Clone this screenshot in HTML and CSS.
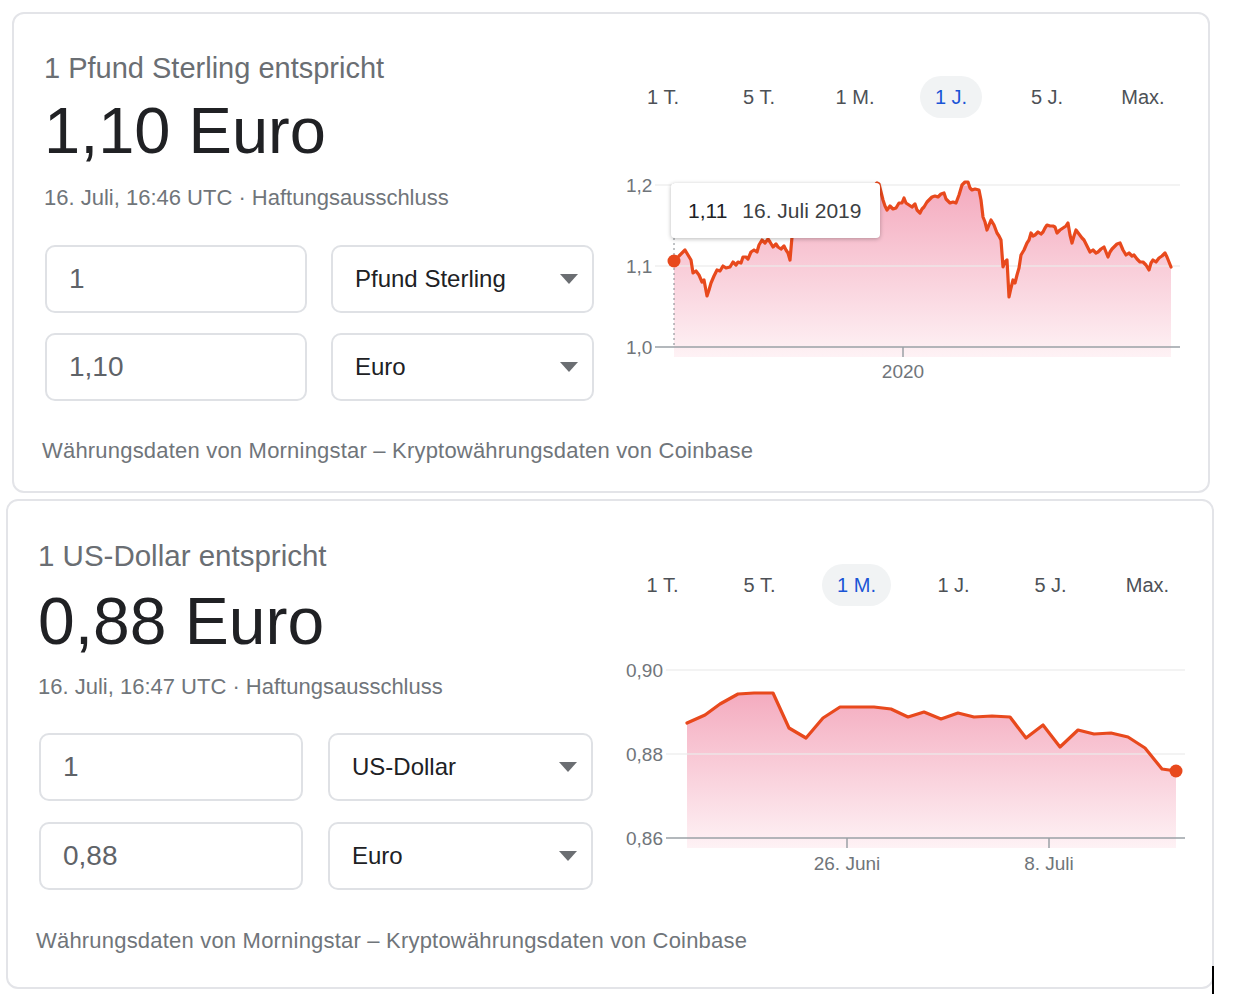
FILE: index.html
```html
<!DOCTYPE html>
<html lang="de">
<head>
<meta charset="utf-8">
<title>Währungsrechner</title>
<link rel="stylesheet" href="styles.css">
</head>
<body>
<section class="card card--gbp">
  <div class="card__row">
    <div class="converter">
      <div class="converter__title">1 Pfund Sterling entspricht</div>
      <div class="converter__amount">1,10 Euro</div>
      <div class="converter__meta">16. Juli, 16:46 UTC · Haftungsausschluss</div>
      <div class="converter__fields">
        <input class="field field--amount" type="text" value="1" readonly>
        <div class="field field--select"><span>Pfund Sterling</span><svg class="caret" width="18" height="10" viewBox="0 0 18 10"><polygon points="0,0 18,0 9,10"/></svg></div>
        <input class="field field--amount" type="text" value="1,10" readonly>
        <div class="field field--select"><span>Euro</span><svg class="caret" width="18" height="10" viewBox="0 0 18 10"><polygon points="0,0 18,0 9,10"/></svg></div>
      </div>
    </div>
    <div class="chart">
      <div class="chart__tabs">
        <div class="tab"><span>1 T.</span></div>
        <div class="tab"><span>5 T.</span></div>
        <div class="tab"><span>1 M.</span></div>
        <div class="tab tab--active"><span>1 J.</span></div>
        <div class="tab"><span>5 J.</span></div>
        <div class="tab"><span>Max.</span></div>
      </div>
      <div class="chart__plot">
        <svg class="chart__svg" width="580" height="272" viewBox="0 0 580 272">
          <defs>
            <linearGradient id="fillGbp" x1="0" y1="183" x2="0" y2="357" gradientUnits="userSpaceOnUse">
              <stop offset="0" stop-color="#f4aabe"/>
              <stop offset="1" stop-color="#fef2f5"/>
            </linearGradient>
          </defs>
          <g transform="translate(-615 -118)">
            <path fill="url(#fillGbp)" d="M674,262 679,256 685,250 688,255 691,260 693,273 696,271 699,275 702,282 704,280 707,296 709,290 711,283 714,276 717,270 720,271 723,266 726,268 730,267 733,262 736,265 738,262 741,263 743,257 746,257 748,259 751,252 754,250 757,252 759,245 762,240 765,243 768,239 770,242 773,247 776,244 778,247 781,249 784,246 786,250 788,253 790,260 792,237 800,228 810,222 820,216 830,212 840,205 850,200 860,195 870,190 877,183 879,184 881,192 883,200 885,206 887,210 890,206 893,209 896,208 899,203 902,203 904,198 906,203 909,205 912,207 915,204 917,210 920,213 922,209 924,207 927,202 930,199 932,197 935,196 938,197 941,194 944,193 946,199 948,201 950,203 953,202 956,203 959,195 962,185 965,182 968,182 970,188 972,190 975,189 979,190 981,200 983,217 985,222 987,230 989,225 991,220 994,225 997,233 999,236 1001,240 1003,267 1005,262 1007,260 1009,297 1011,288 1013,280 1015,283 1017,275 1019,268 1021,255 1024,250 1027,243 1029,240 1031,233 1033,236 1035,235 1038,232 1041,234 1043,232 1045,228 1047,225 1050,226 1053,226 1055,227 1057,233 1060,230 1063,228 1066,226 1068,223 1070,235 1072,243 1074,236 1076,230 1079,234 1082,238 1084,240 1087,246 1090,252 1093,250 1096,253 1098,252 1101,249 1104,247 1106,252 1108,257 1110,252 1112,249 1114,247 1117,244 1120,243 1123,250 1126,255 1129,253 1132,256 1134,255 1137,259 1140,262 1143,262 1146,265 1149,270 1151,263 1153,260 1156,262 1159,258 1162,256 1165,253 1167,257 1169,262 1171,267 L1171,357 L674,357 Z"/>
            <line class="grid" x1="655" y1="185" x2="1180" y2="185"/>
            <line class="grid" x1="655" y1="266" x2="1180" y2="266"/>
            <line class="axis" x1="655" y1="347" x2="1180" y2="347"/>
            <line class="axis" x1="903" y1="347" x2="903" y2="357"/>
            <line class="crosshair" x1="674" y1="183" x2="674" y2="347"/>
            <polyline class="line" points="674,262 679,256 685,250 688,255 691,260 693,273 696,271 699,275 702,282 704,280 707,296 709,290 711,283 714,276 717,270 720,271 723,266 726,268 730,267 733,262 736,265 738,262 741,263 743,257 746,257 748,259 751,252 754,250 757,252 759,245 762,240 765,243 768,239 770,242 773,247 776,244 778,247 781,249 784,246 786,250 788,253 790,260 792,237 800,228 810,222 820,216 830,212 840,205 850,200 860,195 870,190 877,183 879,184 881,192 883,200 885,206 887,210 890,206 893,209 896,208 899,203 902,203 904,198 906,203 909,205 912,207 915,204 917,210 920,213 922,209 924,207 927,202 930,199 932,197 935,196 938,197 941,194 944,193 946,199 948,201 950,203 953,202 956,203 959,195 962,185 965,182 968,182 970,188 972,190 975,189 979,190 981,200 983,217 985,222 987,230 989,225 991,220 994,225 997,233 999,236 1001,240 1003,267 1005,262 1007,260 1009,297 1011,288 1013,280 1015,283 1017,275 1019,268 1021,255 1024,250 1027,243 1029,240 1031,233 1033,236 1035,235 1038,232 1041,234 1043,232 1045,228 1047,225 1050,226 1053,226 1055,227 1057,233 1060,230 1063,228 1066,226 1068,223 1070,235 1072,243 1074,236 1076,230 1079,234 1082,238 1084,240 1087,246 1090,252 1093,250 1096,253 1098,252 1101,249 1104,247 1106,252 1108,257 1110,252 1112,249 1114,247 1117,244 1120,243 1123,250 1126,255 1129,253 1132,256 1134,255 1137,259 1140,262 1143,262 1146,265 1149,270 1151,263 1153,260 1156,262 1159,258 1162,256 1165,253 1167,257 1169,262 1171,267"/>
            <circle class="dot" cx="674" cy="261" r="6.5"/>
            <text class="ylabel" x="626" y="192">1,2</text>
            <text class="ylabel" x="626" y="273">1,1</text>
            <text class="ylabel" x="626" y="354">1,0</text>
            <text class="xlabel" x="903" y="378">2020</text>
          </g>
        </svg>
        <div class="tooltip"><span class="tooltip__value">1,11</span><span class="tooltip__date">16. Juli 2019</span></div>
      </div>
    </div>
  </div>
  <p class="card__source">Währungsdaten von Morningstar – Kryptowährungsdaten von Coinbase</p>
</section>

<section class="card card--usd">
  <div class="card__row">
    <div class="converter">
      <div class="converter__title">1 US-Dollar entspricht</div>
      <div class="converter__amount">0,88 Euro</div>
      <div class="converter__meta">16. Juli, 16:47 UTC · Haftungsausschluss</div>
      <div class="converter__fields">
        <input class="field field--amount" type="text" value="1" readonly>
        <div class="field field--select"><span>US-Dollar</span><svg class="caret" width="18" height="10" viewBox="0 0 18 10"><polygon points="0,0 18,0 9,10"/></svg></div>
        <input class="field field--amount" type="text" value="0,88" readonly>
        <div class="field field--select"><span>Euro</span><svg class="caret" width="18" height="10" viewBox="0 0 18 10"><polygon points="0,0 18,0 9,10"/></svg></div>
      </div>
    </div>
    <div class="chart">
      <div class="chart__tabs">
        <div class="tab"><span>1 T.</span></div>
        <div class="tab"><span>5 T.</span></div>
        <div class="tab tab--active"><span>1 M.</span></div>
        <div class="tab"><span>1 J.</span></div>
        <div class="tab"><span>5 J.</span></div>
        <div class="tab"><span>Max.</span></div>
      </div>
      <div class="chart__plot">
        <svg class="chart__svg" width="580" height="272" viewBox="0 0 580 272">
          <defs>
            <linearGradient id="fillUsd" x1="0" y1="690" x2="0" y2="848" gradientUnits="userSpaceOnUse">
              <stop offset="0" stop-color="#f4aabe"/>
              <stop offset="1" stop-color="#fef2f5"/>
            </linearGradient>
          </defs>
          <g transform="translate(-614 -606)">
            <path fill="url(#fillUsd)" d="M687,723 705,715 720,704 738,694 754,693 773,693 789,728 806,738 823,718 840,707 856,707 874,707 891,709 908,717 924,712 941,719 958,713 974,717 992,716 1010,717 1026,738 1043,725 1060,747 1078,730 1094,734 1111,733 1128,737 1145,748 1162,769 1176,771 L1176,848 L687,848 Z"/>
            <line class="grid" x1="666" y1="670" x2="1185" y2="670"/>
            <line class="grid" x1="666" y1="754" x2="1185" y2="754"/>
            <line class="axis" x1="666" y1="838" x2="1185" y2="838"/>
            <line class="axis" x1="847" y1="838" x2="847" y2="848"/>
            <line class="axis" x1="1049" y1="838" x2="1049" y2="848"/>
            <polyline class="line" points="687,723 705,715 720,704 738,694 754,693 773,693 789,728 806,738 823,718 840,707 856,707 874,707 891,709 908,717 924,712 941,719 958,713 974,717 992,716 1010,717 1026,738 1043,725 1060,747 1078,730 1094,734 1111,733 1128,737 1145,748 1162,769 1176,771"/>
            <circle class="dot" cx="1176" cy="771" r="6.5"/>
            <text class="ylabel" x="626" y="677">0,90</text>
            <text class="ylabel" x="626" y="761">0,88</text>
            <text class="ylabel" x="626" y="845">0,86</text>
            <text class="xlabel" x="847" y="870">26. Juni</text>
            <text class="xlabel" x="1049" y="870">8. Juli</text>
          </g>
        </svg>
      </div>
    </div>
  </div>
  <p class="card__source">Währungsdaten von Morningstar – Kryptowährungsdaten von Coinbase</p>
</section>
<div class="cursor"></div>
</body>
</html>
```

FILE: styles.css
```css
* { box-sizing: border-box; }

html, body {
  margin: 0;
  padding: 0;
  background: #ffffff;
}

body {
  position: relative;
  width: 1234px;
  height: 1004px;
  overflow: hidden;
  font-family: "Liberation Sans", Arial, sans-serif;
  color: #202124;
}

.card {
  border: 2px solid #e3e4e8;
  border-radius: 12px;
  background: #ffffff;
}

.card--gbp {
  width: 1198px;
  margin: 12px 0 0 12px;
  padding: 36px 0 26px 30px;
}

.card--usd {
  width: 1208px;
  height: 490px;
  margin: 6px 0 0 6px;
  padding: 37px 0 0 30px;
}

.card__row {
  display: flex;
  align-items: flex-start;
  gap: 21px;
}

/* ---------- converter (left) ---------- */
.converter {
  width: 550px;
  flex: none;
}

.card--usd .converter { width: 555px; }

.converter__title {
  font-size: 29px;
  line-height: 36px;
  color: #6a6e73;
  white-space: nowrap;
}

.card--usd .converter__title { font-size: 29.5px; }

.converter__amount {
  margin-top: 7px;
  font-size: 65px;
  line-height: 76px;
  color: #202124;
  white-space: nowrap;
}

.card--usd .converter__amount {
  margin-top: 9px;
  font-size: 66px;
}

.converter__meta {
  margin-top: 15px;
  font-size: 22px;
  line-height: 28px;
  color: #70757a;
  white-space: nowrap;
}

.card--usd .converter__meta { margin-top: 14px; }

.converter__fields {
  margin-top: 33px;
  display: grid;
  grid-template-columns: 262px 263px;
  grid-auto-rows: 68px;
  column-gap: 24px;
  row-gap: 20px;
  margin-left: 1px;
}

.card--usd .converter__fields {
  margin-top: 32px;
  grid-template-columns: 264px 265px;
  column-gap: 25px;
  row-gap: 21px;
}

.field {
  height: 68px;
  border: 2px solid #dfe1e5;
  border-radius: 10px;
  background: #ffffff;
  font-family: "Liberation Sans", Arial, sans-serif;
}

.field--amount {
  width: 100%;
  margin: 0;
  padding: 0 22px;
  font-size: 28px;
  color: #5f6368;
  outline: none;
}

.field--select {
  display: flex;
  align-items: center;
  justify-content: space-between;
  padding: 0 14px 0 22px;
  font-size: 24px;
  color: #202124;
}

.caret {
  display: block;
  fill: #6b6e72;
  margin-top: -1px;
}

/* ---------- chart (right) ---------- */
.chart {
  width: 580px;
  flex: none;
}

.chart__tabs {
  display: flex;
  margin-top: 26px;
  height: 42px;
}

.tab {
  width: 96px;
  flex: none;
  display: flex;
  justify-content: center;
  align-items: center;
  font-size: 20px;
  color: #4d5156;
}

.card--usd .tab { width: 97px; }

.tab span {
  display: block;
  height: 42px;
  line-height: 42px;
  padding: 0 15px;
  border-radius: 21px;
  white-space: nowrap;
}

.tab--active span {
  background: #f1f3f4;
  color: #1a55d6;
}

.chart__plot {
  position: relative;
  height: 272px;
}

.chart__svg {
  display: block;
  overflow: visible;
}

.chart__svg .grid {
  stroke: #ececec;
  stroke-opacity: 0.8;
  stroke-width: 1.5;
}

.chart__svg .axis {
  stroke: #9aa0a6;
  stroke-width: 1.5;
}

.chart__svg .crosshair {
  stroke: #80868b;
  stroke-width: 1;
  stroke-dasharray: 2 3;
}

.chart__svg .line {
  fill: none;
  stroke: #e8491d;
  stroke-width: 3.2;
  stroke-linejoin: round;
  stroke-linecap: round;
}

.chart__svg .dot {
  fill: #e8491d;
}

.chart__svg .ylabel {
  font-family: "Liberation Sans", Arial, sans-serif;
  font-size: 19px;
  fill: #70757a;
}

.chart__svg .xlabel {
  font-family: "Liberation Sans", Arial, sans-serif;
  font-size: 19px;
  fill: #70757a;
  text-anchor: middle;
}

.tooltip {
  position: absolute;
  left: 56px;
  top: 65px;
  width: 209px;
  height: 55px;
  display: flex;
  align-items: center;
  gap: 15px;
  padding-left: 17px;
  background: #ffffff;
  border-radius: 4px;
  box-shadow: 0 1px 4px rgba(0, 0, 0, 0.28);
  font-size: 21px;
  white-space: nowrap;
}

.tooltip__value { color: #202124; }
.tooltip__date { color: #3c4043; }

/* ---------- footer ---------- */
.card__source {
  margin: 36px 0 0 -2px;
  font-size: 22px;
  line-height: 28px;
  letter-spacing: 0.2px;
  color: #70757a;
  white-space: nowrap;
}

.card--usd .card__source { margin-top: 37px; }

/* text cursor artifact at the bottom right */
.cursor {
  position: absolute;
  left: 1212px;
  top: 966px;
  width: 2px;
  height: 28px;
  background: #000000;
}
```
